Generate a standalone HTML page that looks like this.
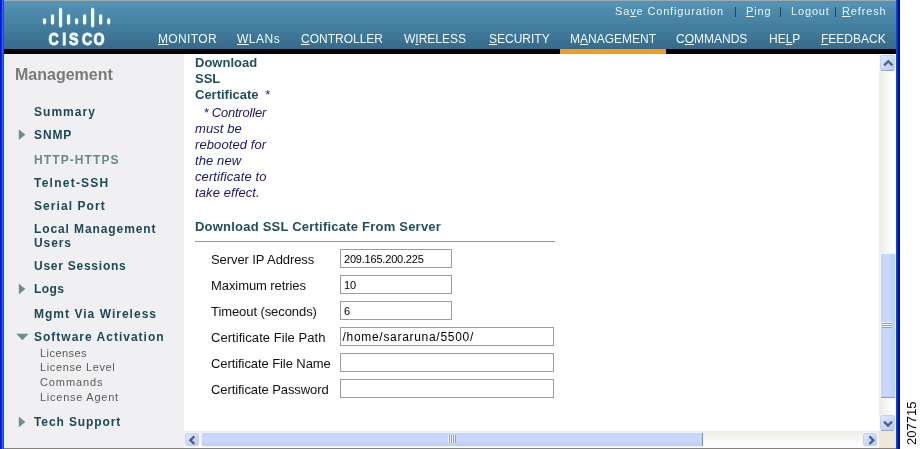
<!DOCTYPE html>
<html><head><meta charset="utf-8">
<style>
*{margin:0;padding:0;box-sizing:border-box}
html,body{width:921px;height:449px;overflow:hidden;background:#fff;font-family:"Liberation Sans",sans-serif}
.a{position:absolute;white-space:nowrap;will-change:transform}
#lb{left:0;top:0;width:4px;height:449px;background:linear-gradient(90deg,#0018c8 0,#0018c8 1px,#0a2ed8 1px,#0a2ed8 2px,#3060ff 2px,#3060ff 3px,#2048c0 3px)}
#rb{left:896px;top:0;width:4px;height:449px;background:linear-gradient(90deg,#2858e8 0,#0a30d0 1px,#0420b8 2px,#001090 3px)}
#bot{left:4px;top:448px;width:892px;height:1px;background:#828279}
#hdr{left:4px;top:0;width:892px;height:49px;background:linear-gradient(180deg,#94aebb 0,#94aebb 1px,#6290a6 1px,#5e8ea6 3px,#5294b8 4.5px,#5193b5 6px,#4e8cad 9px,#4884a4 20px,#3f7898 34px,#386a89 49px)}
#blk{left:4px;top:49px;width:892px;height:5px;background:#000}
#org{left:560px;top:49px;width:106px;height:5px;background:#f39b1c}
.tl{top:5px;font-size:11px;color:#e4f6fa;letter-spacing:0.85px}
.sep{top:5px;font-size:11px;color:#1d3c55}
.mn{top:32px;font-size:12px;color:#eefcff}
u{text-decoration:underline}
#lp{left:4px;top:54px;width:180px;height:394px;background:linear-gradient(90deg,#eaf8fc 0,#eaf8fc 1px,#ecf0ea 1px,#ecf0ea 4px,#f0eff2 4px)}
.nv{font-size:12px;line-height:12px;font-weight:bold;color:#1c4858;letter-spacing:0.9px}
.sb{font-size:11px;line-height:11px;color:#5a5a5a;letter-spacing:0.45px}
.ar{width:0;height:0;border-top:5px solid transparent;border-bottom:5px solid transparent;border-left:6px solid #6f8f8c}
.ct{font-size:13px;font-weight:bold;color:#21505c}
.it{font-size:13px;font-style:italic;color:#181860}
.lbl{font-size:13px;line-height:13px;color:#111;letter-spacing:-0.08px}
.inp{height:19px;border:1px solid #9c9c9c;background:#fff;padding-left:3px;line-height:16px;color:#000}
.btn{background:linear-gradient(135deg,#dfe8fd 0,#c8d6fb 60%,#b9caf4 100%);border:1px solid #c5d0ec;border-radius:2px;box-shadow:0 0 0 1px #f4f7fe}
.thv{background:linear-gradient(90deg,#c6d4fb 0,#cad8fc 50%,#bccdf8 100%);border:1px solid #f0f4ff;border-radius:2px}
.thh{background:linear-gradient(180deg,#c6d4fb 0,#cad8fc 50%,#bccdf8 100%);border:1px solid #f0f4ff;border-radius:2px}
</style></head><body>
<div class="a" id="lb"></div>
<div class="a" id="rb"></div>
<div class="a" id="bot"></div>
<div class="a" id="hdr"></div>
<div class="a" id="blk"></div>
<div class="a" id="org"></div>

<!-- cisco logo -->
<svg class="a" style="left:40px;top:5px" width="75" height="42" viewBox="40 5 75 42">
 <g fill="#f4fcff">
  <polygon points="44.50,17.80 46.15,19.40 46.15,23.20 44.50,24.80 42.85,23.20 42.85,19.40"/>
  <polygon points="52.52,13.80 54.17,15.40 54.17,23.40 52.52,25.00 50.87,23.40 50.87,15.40"/>
  <polygon points="60.54,7.50 62.19,9.10 62.19,26.20 60.54,27.80 58.89,26.20 58.89,9.10"/>
  <polygon points="68.56,13.80 70.21,15.40 70.21,23.40 68.56,25.00 66.91,23.40 66.91,15.40"/>
  <polygon points="76.58,17.80 78.23,19.40 78.23,23.20 76.58,24.80 74.93,23.20 74.93,19.40"/>
  <polygon points="84.60,13.80 86.25,15.40 86.25,23.40 84.60,25.00 82.95,23.40 82.95,15.40"/>
  <polygon points="92.62,7.50 94.27,9.10 94.27,26.20 92.62,27.80 90.97,26.20 90.97,9.10"/>
  <polygon points="100.64,13.80 102.29,15.40 102.29,23.40 100.64,25.00 98.99,23.40 98.99,15.40"/>
  <polygon points="108.66,17.80 110.31,19.40 110.31,23.20 108.66,24.80 107.01,23.20 107.01,19.40"/>
 </g>
 <text y="45" font-family="Liberation Sans" font-weight="bold" font-size="16.5" fill="#f4fcff" stroke="#f4fcff" stroke-width="0.9" transform="translate(48 0) scale(0.86 1)"><tspan x="0.5">C</tspan><tspan x="16.5">I</tspan><tspan x="24.5">S</tspan><tspan x="39.5">C</tspan><tspan x="53">O</tspan></text>
</svg>

<div class="a tl" style="left:615px">Sa<u>v</u>e Configuration</div>
<div class="a sep" style="left:734px">|</div>
<div class="a tl" style="left:746px"><u>P</u>ing</div>
<div class="a sep" style="left:779px">|</div>
<div class="a tl" style="left:791px">Lo<u>g</u>out</div>
<div class="a sep" style="left:834px">|</div>
<div class="a tl" style="left:842px"><u>R</u>efresh</div>

<div class="a mn" style="left:158px;letter-spacing:0.35px"><u>M</u>ONITOR</div>
<div class="a mn" style="left:237px;letter-spacing:0.5px"><u>W</u>LANs</div>
<div class="a mn" style="left:301px"><u>C</u>ONTROLLER</div>
<div class="a mn" style="left:404px">W<u>I</u>RELESS</div>
<div class="a mn" style="left:489px"><u>S</u>ECURITY</div>
<div class="a mn" style="left:570px">M<u>A</u>NAGEMENT</div>
<div class="a mn" style="left:676px">C<u>O</u>MMANDS</div>
<div class="a mn" style="left:769px">HE<u>L</u>P</div>
<div class="a mn" style="left:821px"><u>F</u>EEDBACK</div>

<div class="a" id="lp"></div>
<div class="a" style="left:15px;top:67px;font-size:16px;font-weight:bold;color:#7a7a7a;line-height:16px">Management</div>
<div class="a nv" style="left:34px;top:106px;letter-spacing:1.04px">Summary</div>
<svg class="a" style="left:0;top:0" width="40" height="449"><polygon points="18.8,129.3 25.3,134.7 18.8,140.1" fill="#6e8e8c"/></svg>
<div class="a nv" style="left:34px;top:129px">SNMP</div>
<div class="a nv" style="left:34px;top:154px;color:#6d8888;letter-spacing:1.1px">HTTP-HTTPS</div>
<div class="a nv" style="left:34px;top:177px;letter-spacing:1.24px">Telnet-SSH</div>
<div class="a nv" style="left:34px;top:200px;letter-spacing:1.06px">Serial Port</div>
<div class="a nv" style="left:34px;top:223px">Local Management</div>
<div class="a nv" style="left:34px;top:237px">Users</div>
<div class="a nv" style="left:34px;top:260px;letter-spacing:0.75px">User Sessions</div>
<svg class="a" style="left:0;top:0" width="40" height="449"><polygon points="18.8,283.6 25.3,289.0 18.8,294.4" fill="#6e8e8c"/></svg>
<div class="a nv" style="left:34px;top:283px;letter-spacing:0.4px">Logs</div>
<div class="a nv" style="left:34px;top:308px;letter-spacing:1.02px">Mgmt Via Wireless</div>
<svg class="a" style="left:0;top:0" width="40" height="449"><polygon points="16.2,333.8 28.6,333.8 22.4,340.2" fill="#6e8e8c"/></svg>
<div class="a nv" style="left:34px;top:331px;letter-spacing:1.0px">Software Activation</div>
<div class="a sb" style="left:40px;top:348px">Licenses</div>
<div class="a sb" style="left:40px;top:362px;letter-spacing:0.62px">License Level</div>
<div class="a sb" style="left:40px;top:377px;letter-spacing:0.9px">Commands</div>
<div class="a sb" style="left:40px;top:392px;letter-spacing:0.75px">License Agent</div>
<svg class="a" style="left:0;top:0" width="40" height="449"><polygon points="18.8,416.5 25.3,421.9 18.8,427.3" fill="#6e8e8c"/></svg>
<div class="a nv" style="left:34px;top:416px">Tech Support</div>

<!-- content -->
<div class="a ct" style="left:195px;top:55px;line-height:16px">Download<br>SSL<br>Certificate <span style="color:#2a2a6a;font-weight:normal;margin-left:3px">*</span></div>
<div class="a it" style="left:195px;top:105px;line-height:16px;letter-spacing:0.1px">&nbsp; <span style="padding-left:1px;letter-spacing:-0.2px">* Controller</span><br>must be<br>rebooted for<br>the new<br>certificate to<br>take effect.</div>
<div class="a ct" style="left:195px;top:220px;line-height:13px;letter-spacing:0.22px">Download SSL Certificate From Server</div>
<div class="a" style="left:195px;top:241px;width:360px;height:1px;background:#999"></div>
<div class="a lbl" style="left:211px;top:253px">Server IP Address</div>
<div class="a lbl" style="left:211px;top:279px">Maximum retries</div>
<div class="a lbl" style="left:211px;top:305px">Timeout (seconds)</div>
<div class="a lbl" style="left:211px;top:331px;letter-spacing:0.05px">Certificate File Path</div>
<div class="a lbl" style="left:211px;top:357px">Certificate File Name</div>
<div class="a lbl" style="left:211px;top:383px">Certificate Password</div>
<div class="a inp" style="left:340px;top:249px;width:112px"><span style="font-size:11px;letter-spacing:-0.2px">209.165.200.225</span></div>
<div class="a inp" style="left:340px;top:275px;width:112px"><span style="font-size:11px">10</span></div>
<div class="a inp" style="left:340px;top:301px;width:112px"><span style="font-size:11px">6</span></div>
<div class="a inp" style="left:340px;top:327px;width:214px;padding-left:1.5px"><span style="font-size:12px;letter-spacing:0.7px">/home/sararuna/5500/</span></div>
<div class="a inp" style="left:340px;top:353px;width:214px"></div>
<div class="a inp" style="left:340px;top:379px;width:214px"></div>

<!-- v scrollbar -->
<div class="a" style="left:879px;top:54px;width:17px;height:377px;background:linear-gradient(90deg,#ebebe8 0,#f3f3ef 30%,#faf9f3 60%,#fafdff 80%,#fafdff 100%)"></div>
<div class="a btn" style="left:880px;top:55px;width:15px;height:16px"><svg class="a" style="left:0;top:0" width="15" height="16"><path d="M3.2 9.4 L7.3 5.3 L11.4 9.4" stroke="#4d6185" stroke-width="2.3" fill="none"/></svg></div>
<div class="a" style="left:881px;top:70px;width:13px;height:1px;background:#9aa6bd"></div>
<div class="a thv" style="left:880px;top:253px;width:16px;height:145px;border-bottom:1px solid #7e8db2"></div>
<div class="a" style="left:881px;top:397px;width:14px;height:1px;background:#8e9cc0"></div>
<div class="a" style="left:882px;top:322px;width:10px;height:6px;background:repeating-linear-gradient(180deg,#eef4ff 0,#eef4ff 1px,#8c9fd0 1px,#8c9fd0 2px)"></div>
<div class="a btn" style="left:880px;top:415px;width:15px;height:15px"><svg class="a" style="left:0;top:0" width="15" height="15"><path d="M3 5.6 L7 9.6 L11 5.6" stroke="#4d6185" stroke-width="2.3" fill="none"/></svg></div>
<div class="a" style="left:881px;top:430px;width:13px;height:1px;background:#9aa6bd"></div>
<!-- h scrollbar -->
<div class="a" style="left:184px;top:431px;width:695px;height:17px;background:linear-gradient(180deg,#ebebe8 0,#f3f3ef 30%,#faf9f3 60%,#fafdff 80%,#fafdff 100%)"></div>
<div class="a btn" style="left:185px;top:433px;width:14px;height:13px"><svg class="a" style="left:0;top:0" width="14" height="13"><path d="M8.3 2.4 L4.3 6.2 L8.3 10" stroke="#4d6185" stroke-width="2.3" fill="none"/></svg></div>
<div class="a thh" style="left:201px;top:432px;width:502px;height:15px;border-right:1px solid #7e8db2"></div>
<div class="a" style="left:448px;top:435px;width:8px;height:8px;background:repeating-linear-gradient(90deg,#eef4ff 0,#eef4ff 1px,#8c9fd0 1px,#8c9fd0 2px)"></div>
<div class="a btn" style="left:863px;top:433px;width:14px;height:13px"><svg class="a" style="left:0;top:0" width="14" height="13"><path d="M5.4 2.4 L9.4 6.2 L5.4 10" stroke="#4d6185" stroke-width="2.3" fill="none"/></svg></div>
<div class="a" style="left:879px;top:431px;width:17px;height:17px;background:#ece9d8"></div>

<div class="a" style="left:905px;top:445px;transform:rotate(-90deg);transform-origin:0 0;font-size:13px;line-height:13px;color:#000">207715</div>
</body></html>
